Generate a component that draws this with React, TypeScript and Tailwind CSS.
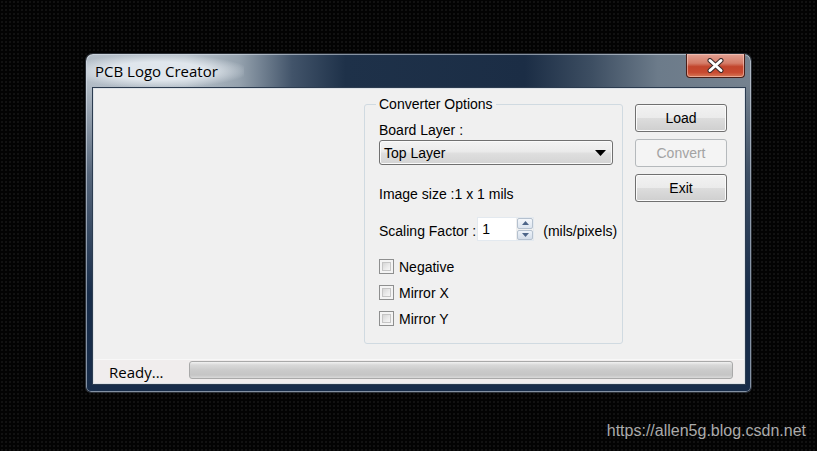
import React from "react";

function Btn({ label, disabled }: { label: string; disabled?: boolean }) {
  return disabled ? (
    <div className="flex h-[28px] w-[92px] items-center justify-center rounded-[3px] border border-[#b5b9bc] bg-[#f4f4f4] text-[14px] leading-[16px] text-[#a3a3a3]">
      {label}
    </div>
  ) : (
    <div className="flex h-[28px] w-[92px] items-center justify-center rounded-[3px] border border-[#707070] bg-[linear-gradient(to_bottom,#f2f2f2_0%,#ebebeb_50%,#dddddd_50%,#cfcfcf_100%)] text-[14px] leading-[16px] text-black shadow-[inset_0_0_0_1px_#fbfbfb]">
      {label}
    </div>
  );
}

function Check({ label }: { label: string }) {
  return (
    <div className="flex h-[15px] items-center">
      <div className="h-[15px] w-[15px] border border-[#8e8f8f] bg-[#f4f4f4] p-[2px]">
        <div className="h-full w-full border border-[#c5c5c5] bg-[linear-gradient(135deg,#d6d6d6_0%,#ececec_60%,#f6f6f6_100%)]" />
      </div>
      <span className="ml-[5px] text-[14px] leading-[16px] text-black">{label}</span>
    </div>
  );
}

export default function App() {
  return (
    <div className="flex h-[451px] w-[817px] flex-col overflow-hidden bg-[#030303] bg-[radial-gradient(circle,#121212_0.7px,transparent_1px)] bg-[length:4px_4px] font-['Liberation_Sans',Arial,sans-serif]">
      <div className="pl-[86px] pt-[54px]">
        {/* window */}
        <div className="flex h-[338px] w-[665px] flex-col rounded-t-[7px] rounded-b-[5px] bg-[linear-gradient(to_bottom,rgba(24,44,72,0)_30px,rgba(24,44,72,0.6)_120px,#182d4a_240px),linear-gradient(to_right,#b3bdc7_0%,#b8c2cb_15%,#95a2ae_23%,#42546a_31%,#1e3149_39%,#1b2d45_66%,#3d4e62_76%,#6c7b8a_86%,#75828f_100%)] shadow-[inset_0_0_0_1px_rgba(220,228,236,0.55),0_0_0_1px_#2a2f36]">
          {/* title bar */}
          <div className="flex h-[34px] items-start justify-between">
            <div className="ml-[1px] mt-[1px] h-[32px] rounded-tl-[6px] bg-[radial-gradient(ellipse_at_45%_50%,rgba(226,232,238,0.95)_40%,rgba(226,232,238,0)_75%)] pl-[8px] pr-[26px] pt-[6px] font-['Open_Sans',sans-serif] text-[15px] leading-[20px] text-black">
              PCB Logo Creator
            </div>
            <div className="mr-[6px] flex h-[24px] w-[59px] items-center justify-center rounded-b-[4px] border border-t-0 border-[#4a1e17] bg-[linear-gradient(to_bottom,#e3a193_0%,#d47c68_40%,#c2452d_55%,#c84a30_80%,#d77a58_100%)] shadow-[inset_0_0_0_1px_rgba(255,220,210,0.5)]">
              <svg width="17" height="15" viewBox="0 0 17 15">
                <path d="M3 2.5 L14 12.5 M14 2.5 L3 12.5" stroke="#3b2a2a" strokeWidth="5" strokeLinecap="round" />
                <path d="M3 2.5 L14 12.5 M14 2.5 L3 12.5" stroke="#ffffff" strokeWidth="3" strokeLinecap="round" />
              </svg>
            </div>
          </div>
          {/* client */}
          <div className="ml-[7px] flex h-[296px] w-[652px] flex-col border border-[#dde2e7] bg-[#f0f0f0] shadow-[0_0_0_1px_#2c3c50]">
            <div className="flex flex-1 items-start pl-[270px]">
              <fieldset className="mt-[7px] h-[248px] w-[259px] rounded-[3px] border border-[#d0dae1] pl-[14px]">
                <legend className="ml-[-3px] px-[3px] text-[14px] leading-[16px] text-black">Converter Options</legend>
                <div className="pt-[10px] text-[14px] leading-[16px] text-black">Board Layer :</div>
                <div className="mt-[2px] flex h-[25px] w-[234px] items-center justify-between rounded-[3px] border border-[#707070] bg-[linear-gradient(to_bottom,#f3f3f3_0%,#ebebeb_45%,#dedede_55%,#d4d4d4_100%)] pl-[4px] pr-[6px] shadow-[inset_0_0_0_1px_#fafafa]">
                  <span className="text-[14px] leading-[16px] text-black">Top Layer</span>
                  <svg width="11" height="6" viewBox="0 0 11 6">
                    <path d="M0 0 H11 L5.5 6 Z" fill="#000" />
                  </svg>
                </div>
                <div className="mt-[21px] text-[14px] leading-[16px] text-black">Image size :1 x 1 mils</div>
                <div className="mt-[15px] flex h-[24px] items-start">
                  <span className="mt-[6px] text-[14px] leading-[16px] text-black">Scaling Factor :</span>
                  <div className="ml-[1px] flex h-[24px] w-[57px] border border-[#e3e9ef] bg-white">
                    <span className="flex-1 pl-[4px] pt-[3px] text-[14px] leading-[16px] text-black">1</span>
                    <div className="flex w-[17px] flex-col gap-[1px] bg-[#f0f0f0] pl-[1px]">
                      <div className="flex h-[11px] items-center justify-center rounded-[2px] border border-[#b5c1cf] bg-[linear-gradient(to_bottom,#f4f7fb,#dde5ef)]">
                        <svg width="7" height="4" viewBox="0 0 7 4"><path d="M0 4 L3.5 0 L7 4 Z" fill="#4d6589" /></svg>
                      </div>
                      <div className="flex h-[11px] items-center justify-center rounded-[2px] border border-[#b5c1cf] bg-[linear-gradient(to_bottom,#eef3f9,#d5deea)]">
                        <svg width="7" height="4" viewBox="0 0 7 4"><path d="M0 0 L7 0 L3.5 4 Z" fill="#4d6589" /></svg>
                      </div>
                    </div>
                  </div>
                  <span className="ml-[9px] mt-[6px] text-[14px] leading-[16px] text-black">(mils/pixels)</span>
                </div>
                <div className="mt-[18px] flex flex-col gap-[11px]">
                  <Check label="Negative" />
                  <Check label="Mirror X" />
                  <Check label="Mirror Y" />
                </div>
              </fieldset>
              <div className="ml-[12px] mt-[15px] flex flex-col gap-[7px]">
                <Btn label="Load" />
                <Btn label="Convert" disabled />
                <Btn label="Exit" />
              </div>
            </div>
            {/* status bar */}
            <div className="flex h-[24px] items-start border-t border-[#f8f8f8] bg-[#f0eded]">
              <span className="w-[95px] pl-[15px] pt-[2px] font-['Open_Sans',sans-serif] text-[15px] leading-[20px] text-black">Ready...</span>
              <div className="mt-[1px] h-[18px] w-[544px] rounded-[3px] border border-[#a9a9a9] bg-[linear-gradient(to_bottom,#f2f2f2_0%,#d9d9d9_18%,#cbcbcb_50%,#c5c5c5_82%,#dadada_100%)]" />
            </div>
          </div>
        </div>
      </div>
      <div className="flex justify-end pr-[11px] pt-[30px]">
        <span className="text-[16px] leading-[18px] text-[#ababab]">https://allen5g.blog.csdn.net</span>
      </div>
    </div>
  );
}
